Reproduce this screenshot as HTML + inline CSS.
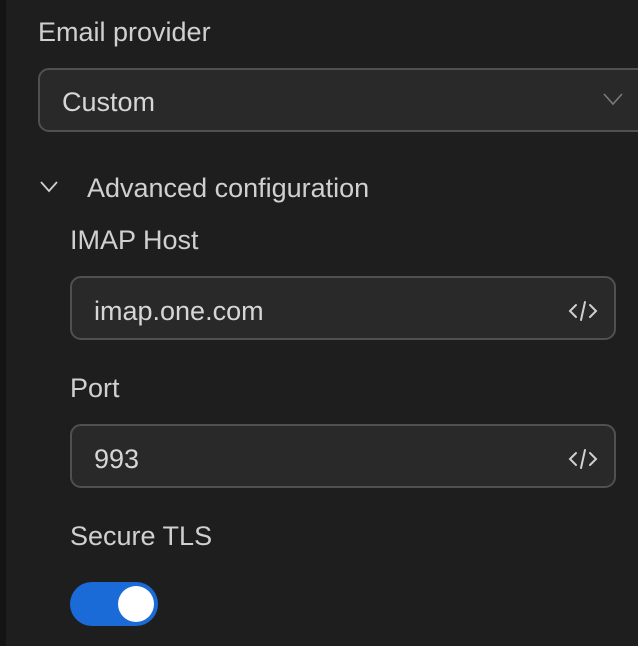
<!DOCTYPE html>
<html><head><meta charset="utf-8"><style>
html,body{margin:0;padding:0;width:638px;height:646px;overflow:hidden;background:#1e1e1e;font-family:"Liberation Sans",sans-serif;color:#d0d0d0}
.strip{position:absolute;left:0;top:0;width:6px;height:646px;background:#141414}
.t{position:absolute;font-size:27px;line-height:30px;white-space:nowrap}
.box{position:absolute;background:#292929;border:2px solid #505050;border-radius:11px;box-sizing:border-box}
svg{position:absolute}
</style></head><body>
<div class="strip"></div>
<div class="t" style="left:38px;top:17px">Email provider</div>
<div class="box" style="left:38px;top:68px;width:620px;height:64px"></div>
<div class="t" style="left:62px;top:87px;color:#d6d6d6">Custom</div>
<svg style="left:602px;top:90px" width="22" height="18" viewBox="0 0 22 18"><path d="M2 4 L11 14 L20 4" fill="none" stroke="#7a7a7a" stroke-width="1.6"/></svg>
<svg style="left:38px;top:178px" width="22" height="18" viewBox="0 0 22 18"><path d="M3 4 L11 13 L19 4" fill="none" stroke="#cfcfcf" stroke-width="1.8"/></svg>
<div class="t" style="left:87px;top:173px">Advanced configuration</div>
<div class="t" style="left:70px;top:225px">IMAP Host</div>
<div class="box" style="left:70px;top:276px;width:546px;height:64px"></div>
<div class="t" style="left:94px;top:296px;color:#d6d6d6">imap.one.com</div>
<svg style="left:567px;top:299px" width="32" height="24" viewBox="0 0 32 24"><path d="M9 6 L3 12 L9 18 M23 6 L29 12 L23 18 M18 3 L14 21" fill="none" stroke="#d0d0d0" stroke-width="2" stroke-linecap="round"/></svg>
<div class="t" style="left:70px;top:373px">Port</div>
<div class="box" style="left:70px;top:424px;width:546px;height:64px"></div>
<div class="t" style="left:94px;top:444px;color:#d6d6d6">993</div>
<svg style="left:567px;top:447px" width="32" height="24" viewBox="0 0 32 24"><path d="M9 6 L3 12 L9 18 M23 6 L29 12 L23 18 M18 3 L14 21" fill="none" stroke="#d0d0d0" stroke-width="2" stroke-linecap="round"/></svg>
<div class="t" style="left:70px;top:521px">Secure TLS</div>
<div style="position:absolute;left:70px;top:582px;width:88px;height:44px;border-radius:22px;background:#1a6ad8"></div>
<div style="position:absolute;left:118px;top:586px;width:36px;height:36px;border-radius:50%;background:#fff"></div>
</body></html>
